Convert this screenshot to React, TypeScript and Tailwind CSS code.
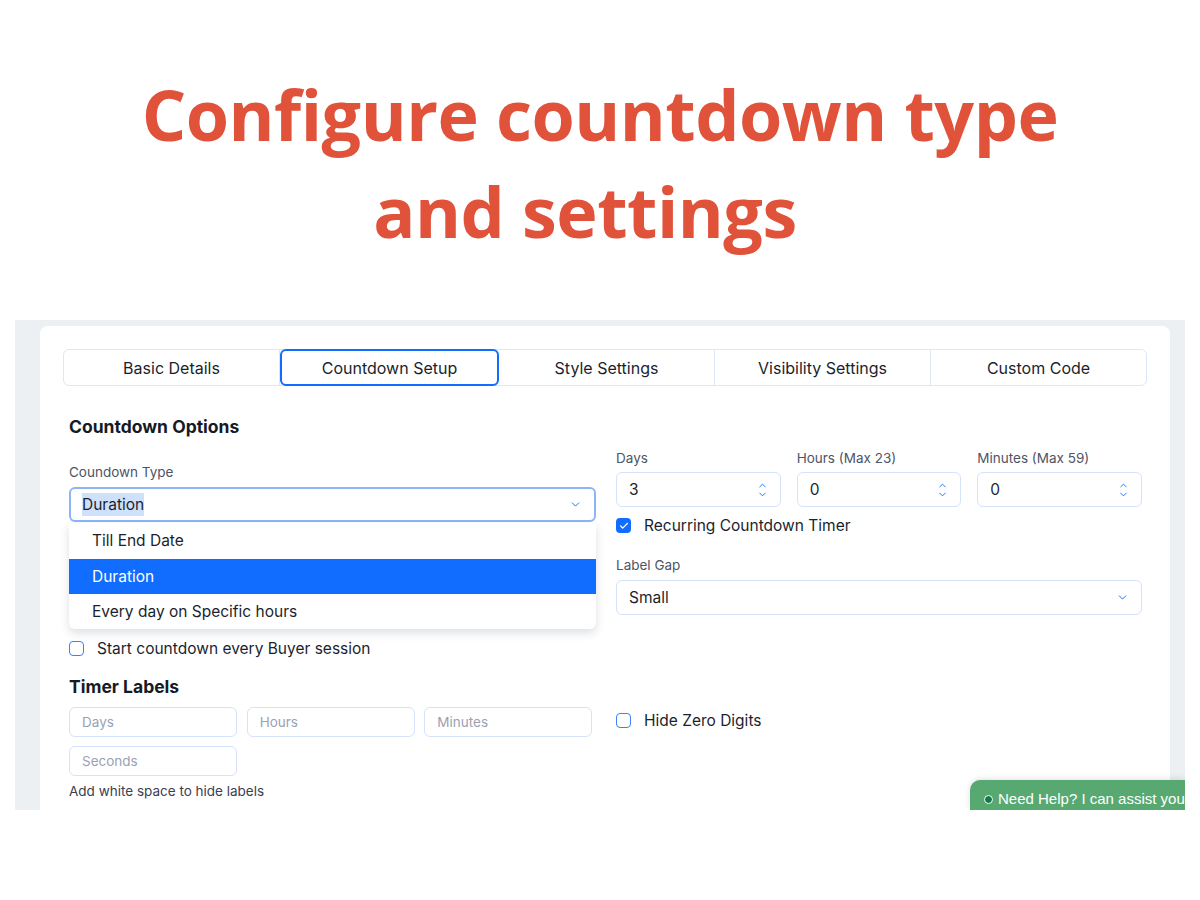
import { Check, ChevronDown, ChevronUp } from 'lucide-react'

const TABS = ['Basic Details', 'Countdown Setup', 'Style Settings', 'Visibility Settings', 'Custom Code']
const ACTIVE_TAB = 1

const UI_FONT = { fontFamily: 'Inter, "Open Sans", sans-serif' }

function Spinner() {
  return (
    <span className="flex flex-col items-center text-[#116dff]">
      <ChevronUp size={11} strokeWidth={2} className="-mb-[2px]" />
      <ChevronDown size={11} strokeWidth={2} />
    </span>
  )
}

function NumberField({ label, value }: { label: string; value: string }) {
  return (
    <div className="flex flex-1 flex-col">
      <span className="mb-[6px] text-[13.5px] leading-4 text-[#4d5566]">{label}</span>
      <div className="flex h-[35px] items-center justify-between rounded-md border border-[#d5e3fa] bg-white pl-3 pr-3 text-[15.5px] text-[#1b1f2e]">
        <span>{value}</span>
        <Spinner />
      </div>
    </div>
  )
}

function Checkbox({ checked, label }: { checked?: boolean; label: string }) {
  return (
    <div className="flex items-center gap-[13px] text-[15.5px] text-[#1b1f2e]">
      {checked ? (
        <span className="flex h-[15px] w-[15px] items-center justify-center rounded-[4px] bg-[#116dff] text-white">
          <Check size={10} strokeWidth={3} />
        </span>
      ) : (
        <span className="h-[15px] w-[15px] rounded-[4px] border-[1.5px] border-[#3b82f6] bg-white" />
      )}
      <span>{label}</span>
    </div>
  )
}

function LabelInput({ placeholder }: { placeholder: string }) {
  return (
    <div className="flex h-[30px] w-[168px] items-center rounded-md border border-[#d5e3fa] bg-white px-3 text-[13.5px] text-[#9aa2b3]">
      {placeholder}
    </div>
  )
}

export default function App() {
  return (
    <div className="min-h-[900px] w-[1200px] bg-white">
      {/* headline */}
      <div
        className="flex h-[320px] flex-col items-center pt-[66px] text-[70px] font-bold leading-[97px] tracking-[-0.5px] text-[#e0533a]"
        style={{ fontFamily: '"Open Sans", sans-serif' }}
      >
        <span>Configure countdown type</span>
        <span className="pr-[30px]">and settings</span>
      </div>

      {/* screenshot */}
      <div className="relative mx-[15px] h-[490px] overflow-hidden bg-[#edf0f3] pt-[6px]" style={UI_FONT}>
        <div className="ml-[25px] h-[600px] w-[1130px] rounded-t-lg bg-white px-[23px] pt-[23px]">
          {/* tabs */}
          <div className="flex h-[37px] rounded-md border border-[#dde7f6]">
            {TABS.map((t, i) => (
              <div
                key={t}
                className={
                  i === ACTIVE_TAB
                    ? '-my-px flex flex-1 items-center justify-center rounded-md border-2 border-[#116dff] text-[16px] text-[#1b1f2e]'
                    : 'flex flex-1 items-center justify-center border-r border-[#dde7f6] text-[16px] text-[#1b1f2e] last:border-r-0'
                }
              >
                {t}
              </div>
            ))}
          </div>

          {/* countdown options */}
          <div className="mt-[31px] flex gap-5 pl-[6px]">
            <div className="flex w-[527px] flex-col">
              <h2 className="text-[17.5px] font-bold leading-5 text-[#161a26]">Countdown Options</h2>
              <span className="mt-[27px] text-[13.5px] leading-4 text-[#4d5566]">Coundown Type</span>
              <div className="relative mt-[7px]">
                <div className="flex h-[35px] items-center justify-between rounded-md border-2 border-[#8bb4fb] bg-white pl-[11px] pr-[12px] text-[15.5px] text-[#1b1f2e]">
                  <span className="bg-[#cfe0fb]">Duration</span>
                  <ChevronDown size={13} strokeWidth={1.8} className="text-[#116dff]" />
                </div>
                <div className="absolute left-0 right-0 top-[36px] z-10 overflow-hidden rounded-b-md bg-white text-[15.5px] text-[#1b1f2e] shadow-[0_4px_10px_rgba(30,40,70,0.15)]">
                  <div className="flex h-[36px] items-center pl-[23px]">Till End Date</div>
                  <div className="flex h-[35px] items-center bg-[#116dff] pl-[23px] text-white">Duration</div>
                  <div className="flex h-[35px] items-center pl-[23px]">Every day on Specific hours</div>
                </div>
              </div>
              <div className="mt-[115px]">
                <Checkbox label="Start countdown every Buyer session" />
              </div>
            </div>

            <div className="mt-[33px] flex w-[526px] flex-col">
              <div className="flex gap-4">
                <NumberField label="Days" value="3" />
                <NumberField label="Hours (Max 23)" value="0" />
                <NumberField label="Minutes (Max 59)" value="0" />
              </div>
              <div className="mt-[7px]">
                <Checkbox checked label="Recurring Countdown Timer" />
              </div>
              <span className="mt-[20px] text-[13.5px] leading-4 text-[#4d5566]">Label Gap</span>
              <div className="mt-[7px] flex h-[35px] items-center justify-between rounded-md border border-[#d5e3fa] bg-white pl-3 pr-[12px] text-[15.5px] text-[#1b1f2e]">
                <span>Small</span>
                <ChevronDown size={13} strokeWidth={1.8} className="text-[#116dff]" />
              </div>
            </div>
          </div>

          {/* timer labels */}
          <div className="mt-[17px] flex gap-6 pl-[6px]">
            <div className="flex w-[523px] flex-col">
              <h2 className="text-[17.5px] font-bold leading-5 text-[#161a26]">Timer Labels</h2>
              <div className="mt-[10px] grid grid-cols-3 gap-x-[10px] gap-y-[9px]">
                <LabelInput placeholder="Days" />
                <LabelInput placeholder="Hours" />
                <LabelInput placeholder="Minutes" />
                <LabelInput placeholder="Seconds" />
              </div>
              <span className="mt-[7px] text-[13.5px] leading-4 text-[#3a4050]">Add white space to hide labels</span>
            </div>
            <div className="mt-[32px]">
              <Checkbox label="Hide Zero Digits" />
            </div>
          </div>
        </div>

        {/* help bubble */}
        <div
          className="absolute bottom-0 right-0 flex h-[30px] w-[215px] items-start gap-[5px] rounded-tl-[10px] bg-[#58a872] pl-[14px] pt-[10px] text-[15px] leading-[18px] text-white shadow-[0_-1px_6px_rgba(0,0,0,0.12)]"
          style={{ fontFamily: '"Liberation Sans", Arial, sans-serif' }}
        >
          <span className="mt-[5px] h-[9px] w-[9px] rounded-full border border-white bg-[#0f7a4a]" />
          <span className="whitespace-nowrap">Need Help? I can assist you</span>
        </div>
      </div>
    </div>
  )
}
